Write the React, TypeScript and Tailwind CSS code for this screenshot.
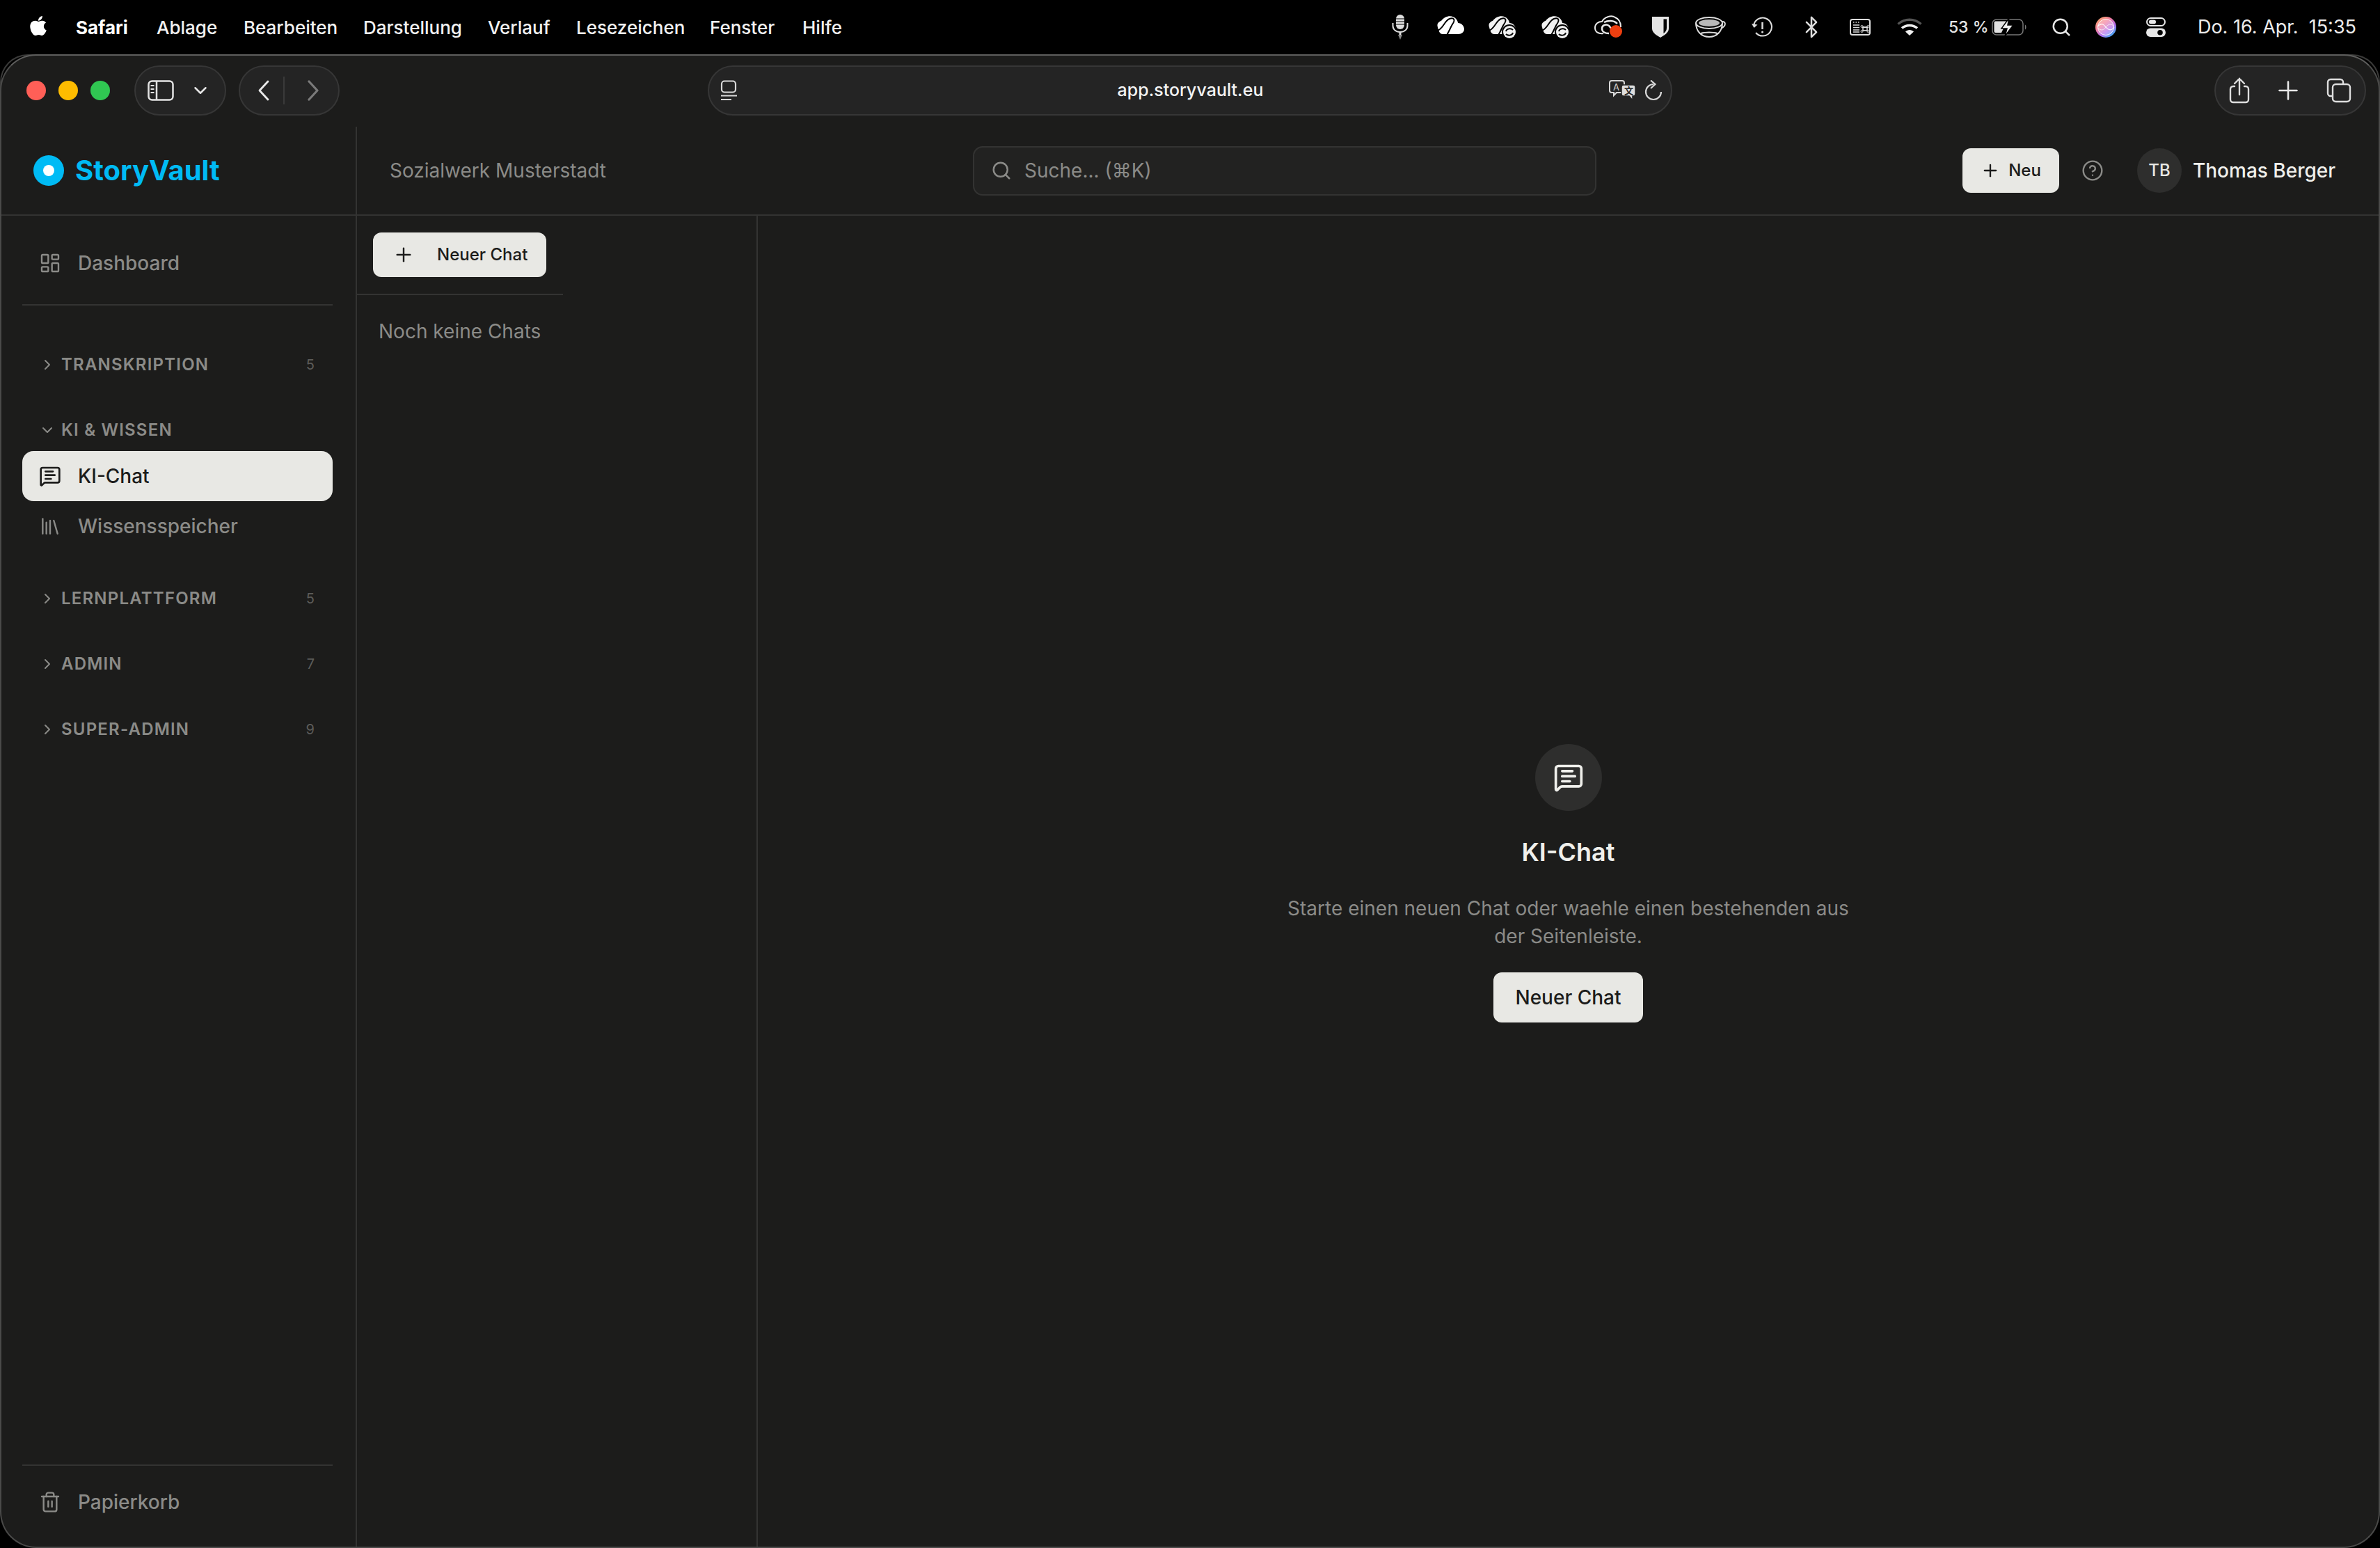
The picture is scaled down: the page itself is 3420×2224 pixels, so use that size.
import { Bluetooth, ChevronDown, ChevronRight, CircleHelp, Library, LayoutDashboard, MessageSquareText, Plus, Search, Trash2 } from 'lucide-react'
import { FaApple } from 'react-icons/fa'

const menuItems = [
  { label: 'Ablage', width: 'w-[84px]' },
  { label: 'Bearbeiten', width: 'w-[131px]' },
  { label: 'Darstellung', width: 'w-[138px]' },
  { label: 'Verlauf', width: 'w-[86px]' },
  { label: 'Lesezeichen', width: 'w-[151px]' },
  { label: 'Fenster', width: 'w-[92px]' },
  { label: 'Hilfe', width: 'w-[55px]' },
]

function CloudIcon({ sync }: { sync?: boolean }) {
  return (
    <svg width="42" height="34" viewBox="0 0 42 34">
      <path d="M2 17C0 12 4 9 7 8C12 1 23-2 29 6C30 8 31 9 31 11C36 11 40 15 40 20C40 24 36 27 32 27H9C5 27 3 22 2 17Z" fill={sync ? '#f2f2f2' : '#fff'} />
      <path d="M1 22C10 20 11 8 19 5C25 3 28 6 23 13C20 18 17 26 15 28" fill="none" stroke="#000" strokeWidth="2" />
      {sync && (
        <>
          <circle cx="31" cy="24" r="11" fill="#000" />
          <circle cx="31" cy="24" r="9" fill="#f2f2f2" />
          <path d="M26 23C27 19 33 18 36 21M36 25C35 29 29 30 26 27" fill="none" stroke="#000" strokeWidth="2" />
        </>
      )}
    </svg>
  )
}

function MicIcon() {
  return (
    <svg width="24" height="38" viewBox="0 0 24 38" fill="none" stroke="#ddd">
      <rect x="6" y="1" width="12" height="21" rx="6" fill="#ddd" stroke="none" />
      <path d="M6 7h12M6 11h12M6 15h12" stroke="#000" strokeWidth="1.2" />
      <path d="M1.500 13v4c0 5 4 9 10.500 9s10.500-4 10.500-9v-4" strokeWidth="2" />
      <path d="M12 26v4" strokeWidth="3" />
      <path d="M9 30l3 7 3-7z" fill="#888" stroke="none" />
    </svg>
  )
}

function CreativeCloudIcon() {
  return (
    <svg width="42" height="34" viewBox="0 0 42 34" fill="none" stroke="#e8e8e8" strokeWidth="2">
      <path d="M13 26C6 27 1 24 1 18C1 12 6 9 11 9C14 3 24-1 30 3C35 5 38 10 38 17" />
      <path d="M14 10C20 7 28 7 33 12M21 26C16 26 11 24 11 19C11 14 17 12 21 15L26 21" strokeWidth="2.500" />
      <circle cx="31" cy="23" r="9" fill="#ee3f10" stroke="none" />
    </svg>
  )
}

function ShieldIcon() {
  return (
    <svg width="26" height="32" viewBox="0 0 26 32">
      <path d="M1 1H25V18C25 24 18 28 13 31C8 28 1 24 1 18Z" fill="#e4e4e4" />
      <path d="M17.500 4.500H22V17C22 21 20 23 17.500 25Z" fill="#000" />
    </svg>
  )
}

function CupIcon() {
  return (
    <svg width="46" height="32" viewBox="0 0 46 32" fill="none" stroke="#dcdcdc" strokeWidth="2">
      <ellipse cx="21" cy="10" rx="19" ry="8" />
      <ellipse cx="21" cy="10" rx="15" ry="5" fill="#b9b9b9" stroke="none" />
      <path d="M2 10C2 22 10 30 21 30C32 30 40 22 40 10M40 8C45 8 46 14 38 18M9 25C15 23 27 23 33 25" />
    </svg>
  )
}

function HistoryIcon() {
  return (
    <svg width="30" height="30" viewBox="0 0 30 30" fill="none" stroke="#ddd" strokeWidth="2">
      <path d="M3 13A13 13 0 1 1 6 23" />
      <path d="M0 10L3.500 16L8.500 11.500Z" fill="#ddd" stroke="none" />
      <path d="M15.500 8v10" strokeWidth="2.500" />
      <circle cx="15.500" cy="22" r="1.500" fill="#ddd" stroke="none" />
    </svg>
  )
}

function KeyboardIcon() {
  return (
    <svg width="30" height="24" viewBox="0 0 30 24" fill="none" stroke="#ddd">
      <rect x="1" y="1" width="28" height="22" rx="3" strokeWidth="2" />
      <path d="M5 5h1.500M8.500 5h1.500M12 5h1.500" strokeWidth="1.500" />
      <path d="M5 9h9M5 12.500h9M5 16h9M5 19h9" strokeWidth="1.500" />
      <path d="M19 11h6v6h-6zM19 11a1.500 1.500 0 1 0-1.500 1.500H26.500a1.500 1.500 0 1 0-1.500-1.500V18a1.500 1.500 0 1 0 1.500-1.500H17.500a1.500 1.500 0 1 0 1.500 1.500Z" strokeWidth="1" />
    </svg>
  )
}

function WifiIcon() {
  return (
    <svg width="36" height="26" viewBox="0 0 36 26" fill="none">
      <path d="M1.500 8.500C11 0 25 0 34.500 8.500" stroke="#555" strokeWidth="3.500" />
      <path d="M7 14.500C13 9 23 9 29 14.500" stroke="#f0f0f0" strokeWidth="3.500" />
      <path d="M18 25L12 19.500C15 16 21 16 24 19.500Z" fill="#f0f0f0" />
    </svg>
  )
}

function BatteryIcon() {
  return (
    <svg width="52" height="26" viewBox="0 0 52 26" fill="none">
      <rect x="1" y="2" width="44" height="22" rx="6" stroke="#777" strokeWidth="1.500" />
      <path d="M3.500 6.500a2 2 0 0 1 2-2H22L14 21H5.500a2 2 0 0 1-2-2Z" fill="#e2e2e2" />
      <path d="M25 0L14 15H22L19 26L31 10H23Z" fill="#f0f0f0" stroke="#000" strokeWidth="1.500" />
      <path d="M48 9.500C50 10.500 50 15.500 48 16.500Z" fill="#777" />
    </svg>
  )
}

function SiriIcon() {
  return (
    <svg width="30" height="30" viewBox="0 0 30 30" fill="none">
      <defs>
        <linearGradient id="siri" x1="0" y1="0" x2="0.800" y2="1">
          <stop offset="0" stopColor="#f8b45f" />
          <stop offset="0.4" stopColor="#f47fa0" />
          <stop offset="0.7" stopColor="#b06ff0" />
          <stop offset="1" stopColor="#2fb8f5" />
        </linearGradient>
      </defs>
      <circle cx="15" cy="15" r="15" fill="url(#siri)" />
      <circle cx="15" cy="15" r="11.500" fill="#fff" fillOpacity="0.3" stroke="#fff" strokeWidth="1" strokeOpacity="0.9" />
      <path d="M3 14C9 8 12 11 15 15C18 19 23 21 27 15" stroke="#fff" strokeWidth="1.200" />
      <path d="M3 16C9 21 12 19 15 15C18 11 23 9 27 14" stroke="#fff" strokeWidth="1" opacity="0.7" />
    </svg>
  )
}

function ControlCenterIcon() {
  return (
    <svg width="28" height="28" viewBox="0 0 28 28" fill="none">
      <rect x="1" y="1" width="26" height="11" rx="5.500" stroke="#e8e8e8" strokeWidth="2" />
      <rect x="4" y="3.500" width="10" height="6" rx="3" fill="#e8e8e8" />
      <rect x="0" y="15.500" width="28" height="12.500" rx="6.200" fill="#e8e8e8" />
      <circle cx="20" cy="21.700" r="3.800" fill="#000" />
    </svg>
  )
}

function MenuBar() {
  return (
    <div className="flex h-[78px] shrink-0 items-center text-[26px] font-medium text-[#f2f2f2]">
      <FaApple className="ml-[39px] mb-[4px] w-[32px] h-[32px] text-white" />
      <span className="ml-[38px] w-[75px] font-bold whitespace-nowrap text-white">Safari</span>
      {menuItems.map((item) => (
        <span key={item.label} className={`ml-[41px] whitespace-nowrap ${item.width}`}>{item.label}</span>
      ))}
      <div className="ml-auto flex items-center">
        <span className="flex w-[74px] justify-center"><MicIcon /></span>
        <span className="flex w-[73px] justify-center"><CloudIcon /></span>
        <span className="flex w-[75px] justify-center"><CloudIcon sync /></span>
        <span className="flex w-[77px] justify-center"><CloudIcon sync /></span>
        <span className="flex w-[76px] justify-center"><CreativeCloudIcon /></span>
        <span className="flex w-[72px] justify-center"><ShieldIcon /></span>
        <span className="flex w-[73px] justify-center"><CupIcon /></span>
        <span className="flex w-[74px] justify-center"><HistoryIcon /></span>
        <span className="flex w-[69px] justify-center"><Bluetooth size={34} strokeWidth={1.8} color="#ddd" /></span>
        <span className="flex w-[70px] justify-center"><KeyboardIcon /></span>
        <span className="flex w-[72px] justify-center"><WifiIcon /></span>
        <span className="ml-[20px] w-[62px] text-[23px] whitespace-nowrap text-[#e4e4e4]">53 %</span>
        <span className="flex w-[52px] justify-center"><BatteryIcon /></span>
        <span className="ml-[8px] -mr-[8px] flex w-[80px] justify-center"><Search size={30} strokeWidth={2} color="#e8e8e8" /></span>
        <span className="flex w-[65px] justify-center"><SiriIcon /></span>
        <span className="flex w-[79px] justify-center"><ControlCenterIcon /></span>
        <span className="ml-[20px] mr-[34px] text-[27px] whitespace-nowrap font-normal text-[#ececec]">Do. 16. Apr.&nbsp; 15:35</span>
      </div>
    </div>
  )
}

function Toolbar() {
  return (
    <div className="flex h-[102px] shrink-0 items-start pl-[36px] pr-[18px] pt-[14px]">
      <div className="mt-[22px] flex gap-[18px]">
        <span className="h-[28px] w-[28px] rounded-full bg-[#ff5f57]" />
        <span className="h-[28px] w-[28px] rounded-full bg-[#febc00]" />
        <span className="h-[28px] w-[28px] rounded-full bg-[#30c752]" />
      </div>
      <div className="ml-[35px] flex h-[72px] w-[132px] items-center rounded-full border-2 border-[#363636] bg-[#242424] pl-[17px]">
        <svg width="38" height="30" viewBox="0 0 38 30" fill="none" stroke="#e4e4e4" strokeWidth="2.500">
          <rect x="1.500" y="1.500" width="35" height="27" rx="5" />
          <path d="M13 1.500v27" />
          <path d="M4.500 8h5M4.500 13h5M4.500 18h5" strokeWidth="2" />
        </svg>
        <ChevronDown className="ml-[23px] h-[30px] w-[30px] text-[#e4e4e4]" strokeWidth={2} />
      </div>
      <div className="ml-[18px] flex h-[72px] w-[145px] items-center rounded-full border-2 border-[#363636] bg-[#242424] pl-[24px]">
        <svg width="20" height="30" viewBox="0 0 20 30" fill="none" stroke="#e8e8e8" strokeWidth="2.800" strokeLinecap="round" strokeLinejoin="round">
          <path d="M16 2L4 15L16 28" />
        </svg>
        <span className="ml-[18px] h-[40px] w-[2px] bg-[#3a3a3a]" />
        <svg className="ml-[31px]" width="20" height="30" viewBox="0 0 20 30" fill="none" stroke="#7a7a7a" strokeWidth="3.200" strokeLinecap="round" strokeLinejoin="round">
          <path d="M4 2L16 15L4 28" />
        </svg>
      </div>
      <div className="ml-[529px] flex h-[72px] w-[1386px] items-center rounded-full border-2 border-[#363636] bg-[#242424] pl-[16px] pr-[12px]">
        <svg width="24" height="30" viewBox="0 0 24 30" fill="none" stroke="#d8d8d8" strokeWidth="2.200">
          <rect x="2" y="1.500" width="20" height="16" rx="4" />
          <path d="M1 22.500h23M1 28h15" />
        </svg>
        <span className="flex-1 pl-[50px] text-center text-[25px] font-medium text-[#f2f2f2]">app.storyvault.eu</span>
        <svg width="40" height="30" viewBox="0 0 40 30">
          <path d="M4 1H19a3 3 0 0 1 3 3V15a3 3 0 0 1-3 3H11L7 22V18H4a3 3 0 0 1-3-3V4a3 3 0 0 1 3-3Z" fill="none" stroke="#d8d8d8" strokeWidth="2" />
          <text x="6" y="14.500" fontSize="13" fill="#d8d8d8" fontFamily="Inter, sans-serif">A</text>
          <path d="M21 7H35a3 3 0 0 1 3 3V20a3 3 0 0 1-3 3H34V29L29 23H21a3 3 0 0 1-3-3V10a3 3 0 0 1 3-3Z" fill="#dedede" stroke="#242424" strokeWidth="1.500" />
          <text x="22" y="20" fontSize="13" fontWeight="700" fill="#242424" fontFamily="'Noto Sans CJK SC', sans-serif">文</text>
        </svg>
        <svg className="ml-[11px]" width="26" height="30" viewBox="0 0 26 30" fill="none" stroke="#d8d8d8" strokeWidth="2.200">
          <path d="M13 6A11 11 0 1 0 24 17" />
          <path d="M9 0.500L15.500 6L9 12" />
        </svg>
      </div>
      <div className="ml-auto flex h-[72px] w-[218px] items-center rounded-full border-2 border-[#363636] bg-[#242424] pl-[19px]">
        <svg width="30" height="38" viewBox="0 0 30 38" fill="none" stroke="#dedede" strokeWidth="2.400" strokeLinecap="round">
          <path d="M8 13H6a4 4 0 0 0-4 4V32a4 4 0 0 0 4 4H24a4 4 0 0 0 4-4V17a4 4 0 0 0-4-4H22" />
          <path d="M15 25V2M8 9L15 2L22 9" />
        </svg>
        <svg className="ml-[41px]" width="28" height="28" viewBox="0 0 28 28" stroke="#e8e8e8" strokeWidth="2.600" strokeLinecap="round">
          <path d="M14 1.500v25M1.500 14h25" />
        </svg>
        <svg className="ml-[41px]" width="36" height="36" viewBox="0 0 36 36" fill="none" stroke="#dedede" strokeWidth="2.400">
          <path d="M8 26H6a4 4 0 0 1-4-4V6a4 4 0 0 1 4-4H20a4 4 0 0 1 4 4V9" />
          <rect x="9" y="9" width="25" height="25" rx="4.500" />
        </svg>
      </div>
    </div>
  )
}

function AppHeader() {
  return (
    <div className="flex h-[128px] shrink-0 items-center border-b-2 border-[#333332]">
      <div className="flex h-full w-[511px] shrink-0 items-center border-r-2 border-[#333332] pl-[46px]">
        <span className="flex h-[44px] w-[44px] items-center justify-center rounded-full bg-[#00bbf5]">
          <span className="h-[16px] w-[16px] rounded-full bg-white" />
        </span>
        <span className="ml-[16px] text-[40px] leading-none font-bold text-[#00bbf5]">StoryVault</span>
      </div>
      <span className="w-[885px] shrink-0 pl-[47px] text-[28px] text-[#8b8b88]">Sozialwerk Musterstadt</span>
      <div className="flex h-[71px] w-[896px] shrink-0 items-center rounded-[14px] border-2 border-[#333332] bg-[#222221] pl-[24px]">
        <Search className="h-[30px] w-[30px] text-[#8b8b88]" strokeWidth={2} />
        <span className="ml-[18px] text-[28px] text-[#8b8b88]">Suche... (⌘K)</span>
      </div>
      <button className="ml-[526px] flex h-[64px] w-[139px] items-center justify-center gap-[12px] rounded-[12px] bg-[#e8e8e4] text-[24px] font-medium text-[#1c1c1b]">
        <Plus className="h-[28px] w-[28px]" strokeWidth={2} />
        Neu
      </button>
      <CircleHelp className="ml-[32px] h-[32px] w-[32px] text-[#8b8b88]" strokeWidth={1.8} />
      <span className="ml-[48px] flex h-[64px] w-[64px] items-center justify-center rounded-full bg-[#2e2e2d] text-[24px] font-medium text-[#e8e8e4]">TB</span>
      <span className="ml-[16px] whitespace-nowrap text-[28px] font-medium text-[#f0f0ec]">Thomas Berger</span>
    </div>
  )
}

function NavRow({ icon, label, active }: { icon: React.ReactNode; label: string; active?: boolean }) {
  return (
    <div className={`flex h-[72px] items-center gap-[24px] rounded-[16px] pl-[24px] text-[28px] font-medium ${active ? 'bg-[#e8e8e4] text-[#1c1c1b]' : 'text-[#8b8b88]'}`}>
      {icon}
      {label}
    </div>
  )
}

function SectionHeader({ label, count, open }: { label: string; count?: number; open?: boolean }) {
  const Chevron = open ? ChevronDown : ChevronRight
  return (
    <div className="flex h-[46px] items-center pl-[24px] pr-[26px] text-[24px] font-semibold tracking-[1.2px] text-[#8b8b88]">
      <Chevron className="h-[24px] w-[24px]" strokeWidth={2} />
      <span className="ml-[8px]">{label}</span>
      {count !== undefined && <span className="ml-auto text-[20px] font-normal tracking-normal text-[#5c5c5a]">{count}</span>}
    </div>
  )
}

function Sidebar() {
  const iconClass = 'h-[32px] w-[32px]'
  return (
    <aside className="flex w-[511px] shrink-0 flex-col border-r-2 border-[#333332] pl-[30px] pr-[33px] pt-[32px] pb-[28px]">
      <NavRow icon={<LayoutDashboard className={iconClass} strokeWidth={1.8} />} label="Dashboard" />
      <div className="mt-[23px] mb-[62px] h-[2px] bg-[#333332]" />
      <SectionHeader label="TRANSKRIPTION" count={5} />
      <div className="mt-[48px]">
        <SectionHeader label="KI & WISSEN" open />
      </div>
      <div className="mt-[7px]">
        <NavRow active icon={<MessageSquareText className={iconClass} strokeWidth={2} />} label="KI-Chat" />
        <NavRow icon={<Library className={iconClass} strokeWidth={1.8} />} label="Wissensspeicher" />
      </div>
      <div className="mt-[45px] flex flex-col gap-[48px]">
        <SectionHeader label="LERNPLATTFORM" count={5} />
        <SectionHeader label="ADMIN" count={7} />
        <SectionHeader label="SUPER-ADMIN" count={9} />
      </div>
      <div className="mt-auto h-[2px] bg-[#333332]" />
      <div className="mt-[16px]">
        <NavRow icon={<Trash2 className={iconClass} strokeWidth={1.8} />} label="Papierkorb" />
      </div>
    </aside>
  )
}

function ChatList() {
  return (
    <div className="w-[576px] shrink-0 border-r-2 border-[#333332]">
      <div className="w-[296px]">
        <div className="border-b-2 border-[#333332] pl-[23px] pt-[24px] pb-[24px]">
          <button className="flex h-[64px] w-[249px] items-center rounded-[12px] bg-[#e8e8e4] pl-[28px] text-[24px] font-medium text-[#1c1c1b]">
            <Plus className="h-[32px] w-[32px]" strokeWidth={1.8} />
            <span className="ml-[32px]">Neuer Chat</span>
          </button>
        </div>
        <p className="mt-[32px] pl-[31px] text-[28px] leading-[40px] whitespace-nowrap text-[#8b8b88]">Noch keine Chats</p>
      </div>
    </div>
  )
}

function EmptyState() {
  return (
    <main className="flex flex-1 flex-col items-center justify-center pt-[6px]">
      <span className="flex h-[96px] w-[96px] items-center justify-center rounded-full bg-[#2e2e2d]">
        <MessageSquareText className="h-[44px] w-[44px] text-[#f0f0ec]" strokeWidth={2} />
      </span>
      <h1 className="mt-[31px] text-[36px] leading-[56px] font-semibold text-[#f0f0ec]">KI-Chat</h1>
      <p className="mt-[33px] w-[840px] text-center text-[28px] leading-[40px] text-[#8b8b88]">
        Starte einen neuen Chat oder waehle einen bestehenden aus der Seitenleiste.
      </p>
      <button className="mt-[32px] h-[72px] w-[215px] rounded-[12px] bg-[#e8e8e4] text-[28px] font-medium text-[#1c1c1b]">Neuer Chat</button>
    </main>
  )
}

export default function App() {
  return (
    <div className="relative flex h-[2224px] w-[3420px] flex-col overflow-hidden bg-black font-['Inter',sans-serif]">
      <MenuBar />
      {/* corners of the window stacked behind the front one */}
      <div className="absolute inset-x-0 top-[78px] h-[120px] rounded-t-[40px] border-x-2 border-t-2 border-[#3a3a39]" />
      <div className="relative flex min-h-0 flex-1 flex-col overflow-hidden rounded-[52px] border-2 border-[#4a4a49] border-t-[#5e5e5d] bg-[#1c1c1b]">
        <Toolbar />
        <AppHeader />
        <div className="flex min-h-0 flex-1">
          <Sidebar />
          <ChatList />
          <EmptyState />
        </div>
      </div>
    </div>
  )
}
